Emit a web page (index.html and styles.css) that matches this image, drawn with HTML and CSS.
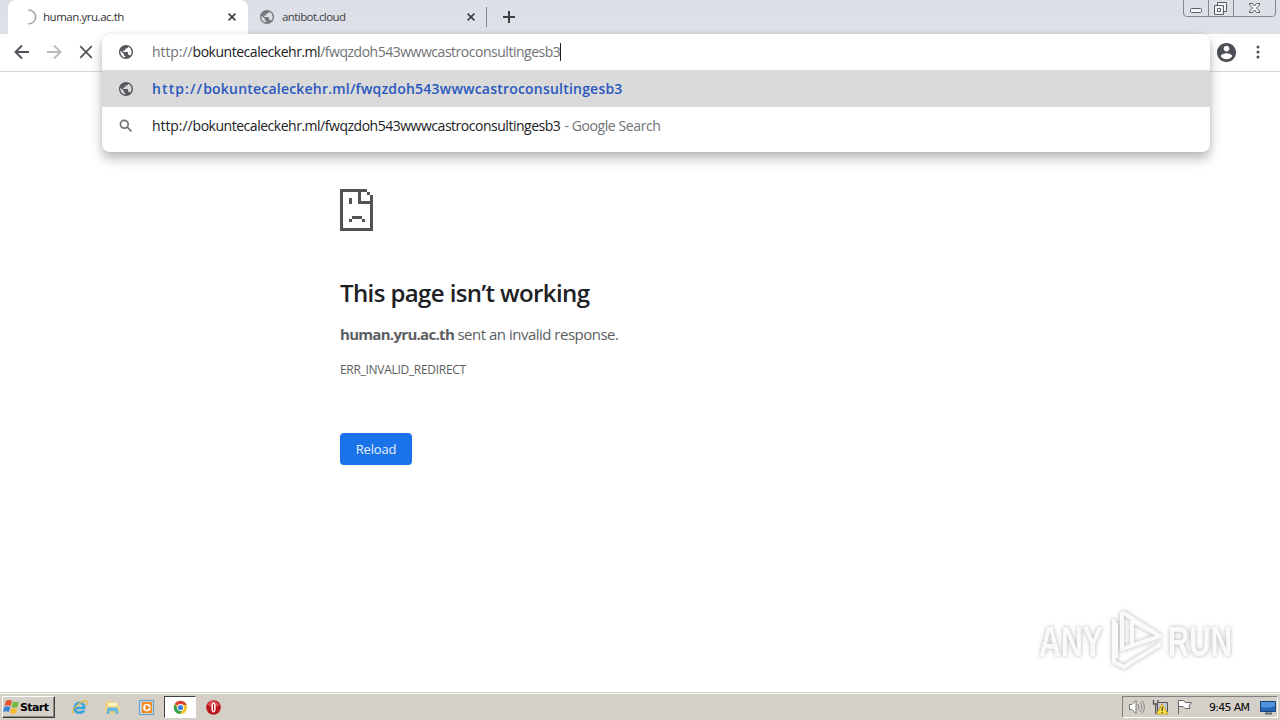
FILE: index.html
```html
<!DOCTYPE html>
<html lang="en">
<head>
<meta charset="utf-8">
<title>human.yru.ac.th</title>
<link rel="stylesheet" href="styles.css">
</head>
<body>
<svg width="0" height="0" class="defs">
  <symbol id="globe" viewBox="2 2 20 20"><path d="M12 2C6.480 2 2 6.480 2 12s4.480 10 10 10 10-4.480 10-10S17.520 2 12 2zm-1 17.930c-3.950-.490-7-3.850-7-7.930 0-.620.080-1.210.210-1.790L9 15v1c0 1.100.900 2 2 2v1.930zm6.900-2.540c-.260-.810-1-1.390-1.900-1.390h-1v-3c0-.550-.450-1-1-1H8v-2h2c.550 0 1-.450 1-1V7h2c1.100 0 2-.900 2-2v-.410c2.930 1.190 5 4.060 5 7.410 0 2.080-.800 3.970-2.100 5.390z"/></symbol>
  <symbol id="close" viewBox="0 0 8 8"><path d="M.6.6l6.8 6.8M7.4.6L.6 7.4"/></symbol>
</svg>
<div class="screen">
  <header class="tabstrip">
    <div class="tab tab-active">
      <svg class="spinner" viewBox="0 0 16 16"><path d="M6.500 1.300a6.800 6.800 0 1 1 .5 13.400"/></svg>
      <span class="tab-title title-one">human.yru.ac.th</span>
      <svg class="close"><use href="#close"/></svg>
    </div>
    <div class="tab tab-idle">
      <svg class="globe tab-globe"><use href="#globe"/></svg>
      <span class="tab-title title-two">antibot.cloud</span>
      <svg class="close"><use href="#close"/></svg>
    </div>
    <i class="tab-sep"></i>
    <svg class="plus" viewBox="0 0 12 12"><path d="M6 0v12M0 6h12"/></svg>
    <svg class="winctl" viewBox="0 0 93 18">
      <path class="frame" d="M.5 0v13q0 3.500 3 3.500h86q3 0 3-3.500V0M25.500 0v16M50.500 0v16"/>
      <rect class="glyph" x="7.500" y="8.500" width="11" height="4" rx="1"/>
      <path class="glyph" d="M34.500 5V2.500h9v9H41M31.500 5.500h9v9h-9zM34.500 8.500h3v3h-3z"/>
      <path class="glyph" d="M66.500 3.500h3l2 2.500 2-2.500h3v1.500l-3 3 3 3v1.500h-3l-2-2.500-2 2.500h-3V11l3-3-3-3z"/>
    </svg>
  </header>
  <div class="toolbar">
    <svg class="nav" viewBox="0 0 16 16"><path d="M15 8H2M8 1.500L1.500 8 8 14.500"/></svg>
    <svg class="nav nav-off" viewBox="0 0 16 16"><path d="M1 8h13M8 1.500L14.500 8 8 14.500"/></svg>
    <svg class="nav nav-stop" viewBox="0 0 16 16"><path d="M2.200 2.200l11.600 11.600M13.800 2.200L2.200 13.800"/></svg>
    <div class="omnibox">
      <div class="row row-input"><svg class="globe"><use href="#globe"/></svg><span class="url"><span class="scheme">http://</span><b>bokuntecaleckehr.ml</b>/fwqzdoh543wwwcastroconsultingesb3</span><i class="caret"></i></div>
      <div class="row row-selected"><svg class="globe"><use href="#globe"/></svg><span class="url url-bold"><span class="scheme">http://</span>bokuntecaleckehr.ml/fwqzdoh543wwwcastroconsultingesb3</span></div>
      <div class="row row-search"><svg class="lens" viewBox="0 0 14 14"><circle cx="5.300" cy="5.300" r="3.900"/><path d="M8.200 8.200l4.300 4.300"/></svg><span class="url url-dark"><span class="scheme">http://</span>bokuntecaleckehr.ml/fwqzdoh543wwwcastroconsultingesb3</span><span class="hint">- Google Search</span></div>
    </div>
    <div class="actions">
      <svg class="avatar" viewBox="2 2 20 20"><path d="M12 2C6.480 2 2 6.480 2 12s4.480 10 10 10 10-4.480 10-10S17.520 2 12 2zm0 3c1.660 0 3 1.340 3 3s-1.340 3-3 3-3-1.340-3-3 1.340-3 3-3zm0 14.200c-2.500 0-4.710-1.280-6-3.220.03-1.990 4-3.080 6-3.080 1.990 0 5.970 1.090 6 3.080-1.290 1.940-3.500 3.220-6 3.220z"/></svg>
      <svg class="dots" viewBox="0 0 4 14"><circle cx="2" cy="2" r="1.500"/><circle cx="2" cy="7" r="1.500"/><circle cx="2" cy="12" r="1.500"/></svg>
    </div>
  </div>
  <main class="page">
    <svg class="sad" viewBox="0 0 33 42"><path d="M0 0h27v3h3v3h3v36H0zM3 3v36h27V15H18V3zM21 3v9h9V6h-3V3z" fill-rule="evenodd"/><path d="M27 3h3v3h-3zM9 9h3v6H9zM12 27h10v3H12zM9 30h3v3H9zM22 30h3v3h-3z"/></svg>
    <h1>This page isn’t working</h1>
    <p class="message"><strong>human.yru.ac.th</strong> <span>sent an invalid response.</span></p>
    <p class="code">ERR_INVALID_REDIRECT</p>
    <button class="reload">Reload</button>
    <svg class="watermark" viewBox="0 0 210 76">
      <g class="mark">
        <text x="9" y="50" textLength="64" lengthAdjust="spacingAndGlyphs">ANY</text>
        <text x="138" y="50" textLength="64" lengthAdjust="spacingAndGlyphs">RUN</text>
        <path d="M92 6l38 24M92 6v37l38-13-28-15v24M84 13v43l8 4M92 62l39-24M86 17v35"/>
      </g>
    </svg>
  </main>
  <footer class="taskbar">
    <div class="start">
      <svg viewBox="0 0 17 16"><path fill="#e6532b" d="M3 2q3-2 6 0L7.500 7q-3-1.500-6 0z"/><path fill="#75b843" d="M10 2.500q3 1.500 6 0L14.500 8q-3 1.500-6 0z"/><path fill="#3c85d8" d="M1.300 8q3-1.500 6 0L6 13q-3-1.500-6 0z"/><path fill="#f5bd2c" d="M8.300 9q3 1.500 6 0L13 14q-3 1.500-6 0z"/></svg>
      <span>Start</span>
    </div>
    <div class="quick">
      <div class="slot"><svg viewBox="0 0 18 18"><path d="M4 9.500h10q0-5-5-5.500-5 .5-5 5.500 0 5 5 5 3.500 0 4.700-2.500" fill="none" stroke="#3ba4df" stroke-width="2.800"/><path d="M2 15.500C-1 12 11 1 16 2c1.500.5 1 3-.5 5" fill="none" stroke="#e4b83d" stroke-width="1.300"/></svg></div>
      <div class="slot"><svg viewBox="0 0 18 18"><path d="M2 3l6-1 1 2h6v11H2z" fill="#efce70"/><path d="M4 4h10v4H4z" fill="#fff3bb"/><path d="M1 8h16v5H1z" fill="#f3d982"/><path d="M3 16v-5q0-2 2-2h8q2 0 2 2v5h-3v-3H6v3z" fill="#69b7dc"/></svg></div>
      <div class="slot"><svg viewBox="0 0 18 18"><path d="M1.500 1.500h15v15h-15z" fill="#b9dcf2" stroke="#5a9cca"/><rect x="4" y="3" width="11" height="12" fill="#f58b1d"/><circle cx="9.500" cy="9" r="4" fill="#fff"/><path d="M8 6l5 3-5 3z" fill="#f07d12"/></svg></div>
      <div class="slot slot-active"><svg viewBox="0 0 18 18"><circle cx="9" cy="9" r="7" fill="#f7c52d"/><path d="M9 9L3 5.300A7 7 0 0 1 15.500 6.300L9 6z" fill="#df4134"/><path d="M3 5.300A7 7 0 0 0 8.500 16L11.500 11 6 10z" fill="#2fa351"/><circle cx="9" cy="9" r="3.600" fill="#fff"/><circle cx="9" cy="9" r="2.700" fill="#3b7ce4"/></svg></div>
      <div class="slot"><svg viewBox="0 0 18 18"><circle cx="9" cy="9" r="7.700" fill="#b9151c"/><path d="M2.500 7Q5 1.500 9 2t6.500 5q-6 2-13 0" fill="#db5054"/><ellipse cx="9" cy="9" rx="2.300" ry="5.200" fill="#fff"/><path d="M9 5.500v7" stroke="#a80f16" stroke-width="1.200"/></svg></div>
    </div>
    <div class="tray">
      <svg class="speaker" viewBox="0 0 18 16"><path d="M1.500 5.500H4l4-4v13l-4-4H1.500z" fill="#fff" stroke="#777"/><path d="M10 5q2 3 0 6M12 3q4 5 0 10M14 1.500q5 6.500 0 13" fill="none" stroke="#888"/></svg>
      <svg class="network" viewBox="0 0 17 16"><path d="M1.500 1v4H6V1M3.700 5v10" fill="none" stroke="#555" stroke-width="1.300"/><path d="M5.500 3.500h10v9h-10z" fill="#c1c9cd" stroke="#555"/><path d="M10 5l6 10H4.500z" fill="#ffe044" stroke="#c29710" stroke-width=".8"/><path d="M10.200 8v4M10.200 13v1" stroke="#333" stroke-width="1.200"/></svg>
      <svg class="flag" viewBox="0 0 17 16"><path d="M2.500 15V1.500h5l2 2h6l-2.500 3 1 3h-5l-2-2H2.500" fill="#fff" stroke="#666"/></svg>
      <span class="clock">9:45 AM</span>
      <svg class="desktop" viewBox="0 0 16 15"><path d="M.5 1.500h15v10H.5z" fill="#2868b8" stroke="#194475"/><path d="M1 2h14v4Q8 9 1 7z" fill="#4d94dd"/><path d="M5 13.500h7" stroke="#5e656a" stroke-width="2"/></svg>
    </div>
  </footer>
</div>
</body>
</html>
```
FILE: styles.css
```css
* { box-sizing: border-box; }
body { margin: 0; background: #fff; font-family: "Open Sans", "Noto Sans", sans-serif; }
svg { display: block; flex: none; }
.defs { position: absolute; }
.screen { width: 1280px; height: 720px; display: flex; flex-direction: column; overflow: hidden; }

.tabstrip { height: 34px; flex: none; display: flex; align-items: center; background: linear-gradient(#dcdfe5, #dee1e7); padding-left: 8px; }
.tab { height: 34px; display: flex; align-items: center; }
.tab-active { width: 240px; background: #fff; border-radius: 8px 8px 0 0; padding: 0 12px 0 14px; }
.tab-idle { width: 238px; padding: 0 11px 0 12px; }
.spinner { width: 16px; height: 16px; margin-left: -1px; margin-right: 1px; fill: none; stroke: #a6a8ac; stroke-width: 1.600; clip-path: inset(0 0 0 45%); }
.tab-title { font-size: 11.500px; line-height: 18px; color: #303236; flex: 1; white-space: nowrap; }
.title-one { margin-left: 5px; letter-spacing: -.46px; }
.title-two { margin-left: 8px; letter-spacing: -.58px; color: #3f4248; }
.close { width: 8px; height: 8px; stroke: #3b3e43; stroke-width: 1.600; overflow: visible; }
.globe { width: 14px; height: 14px; fill: #55585c; }
.tab-globe { fill: #777a7e; }
.tab-sep { width: 1px; height: 20px; background: #80848a; }
.plus { width: 12px; height: 12px; margin-left: 16px; stroke: #3b3e43; stroke-width: 2; }
.winctl { width: 93px; height: 18px; margin-left: auto; margin-right: 4px; align-self: flex-start; fill: none; }
.frame { stroke: #83878e; }
.glyph { stroke: #5a5f66; fill: #f4f5f7; }

.toolbar { height: 38px; flex: none; display: flex; background: #fff; border-bottom: 1px solid #d6d7d9; padding-left: 14px; }
.nav { width: 16px; height: 16px; margin: 10px 16px 0 0; fill: none; stroke: #505357; stroke-width: 1.900; }
.nav-off { stroke: #b8babd; }
.nav-stop { stroke-width: 1.700; }
.omnibox { width: 1108px; height: 118px; margin-left: -8px; flex: none; background: #fff; border-radius: 8px; box-shadow: 0 7px 12px rgba(0,0,0,.26), 0 0 4px rgba(0,0,0,.1); z-index: 2; overflow: hidden; }
.row { height: 37px; display: flex; align-items: center; padding-left: 17px; font-size: 14px; line-height: 20px; white-space: nowrap; color: #707276; }
.row-input { height: 36px; }
.row-selected { background: #dadadb; }
.url { margin-left: 19px; letter-spacing: -.48px; }
.url b { font-weight: 400; color: #202124; }
.scheme { letter-spacing: -.07px; }
.url-dark { color: #202124; }
.url-bold { color: #2958bd; font-weight: 600; letter-spacing: .21px; }
.url-bold .scheme { letter-spacing: 1.100px; }
.hint { margin-left: 4px; letter-spacing: -.4px; }
.caret { width: 1px; height: 18px; background: #222; }
.lens { width: 14px; height: 14px; fill: none; stroke: #707276; stroke-width: 1.700; }
.actions { display: flex; align-items: center; padding-bottom: 1px; }
.avatar { width: 19px; height: 19px; fill: #4c4f54; margin-left: 6.500px; }
.dots { width: 4px; height: 14px; fill: #4c4f54; margin-left: 20.500px; }

.page { flex: 1; position: relative; padding: 117px 0 0 340px; color: #5c5e61; }
.sad { width: 33px; height: 42px; fill: #535353; }
h1 { margin: 44px 0 0; font-size: 24px; line-height: 36px; font-weight: 600; letter-spacing: -.6px; color: #202124; white-space: nowrap; }
p { margin: 0; white-space: nowrap; }
.message { margin-top: 13px; font-size: 15px; line-height: 20px; letter-spacing: -.5px; }
.message strong { font-weight: 700; letter-spacing: -.7px; }
.code { margin-top: 17px; font-size: 12px; line-height: 18px; letter-spacing: -.3px; }
.reload { display: block; margin-top: 54px; width: 72px; height: 32px; padding: 0; border: 0; border-radius: 4px; background: #1a73e8; color: #e6f1ff; font: 13px "Open Sans", sans-serif; letter-spacing: -.15px; }
.watermark { position: absolute; left: 1030px; top: 534px; width: 210px; height: 76px; overflow: visible; filter: drop-shadow(0 0 2px rgba(0,0,0,.3)); }
.mark { fill: #fafafa; font: 700 43px "Liberation Sans", sans-serif; }
.mark path { fill: none; stroke: #fafafa; stroke-width: 4; stroke-linejoin: round; }

.taskbar { height: 28px; flex: none; display: flex; align-items: center; background: #d4d0c8; border-top: 1px solid #d4d0c8; box-shadow: inset 0 1px #fff; padding: 1px 2px 0; }
.start { width: 53px; height: 22px; display: flex; align-items: center; border: 1px solid; border-color: #fff #404040 #404040 #fff; box-shadow: inset -1px -1px #888; padding-left: 0; font: 700 11px "DejaVu Sans", sans-serif; letter-spacing: -.6px; color: #000; }
.start svg { width: 17px; height: 16px; }
.quick { display: flex; margin-left: 8px; gap: 1.700px; }
.slot { width: 32px; height: 22px; display: flex; align-items: center; justify-content: center; }
.slot svg { width: 17px; height: 17px; }
.slot-active { background: #fff; border: 1px solid; border-color: #404040 #fff #fff #404040; }
.tray { width: 156px; height: 22px; margin-left: auto; display: flex; align-items: center; border: 1px solid; border-color: #808080 #fff #fff #808080; padding-left: 5px; }
.speaker { width: 18px; height: 16px; }
.network { width: 17px; height: 16px; margin-left: 6px; }
.flag { width: 17px; height: 16px; margin-left: 7px; }
.clock { margin-left: 16px; width: 44px; font: 11px "DejaVu Sans", sans-serif; letter-spacing: -.7px; white-space: nowrap; color: #000; }
.desktop { width: 16px; height: 15px; margin-left: 7px; }
```
